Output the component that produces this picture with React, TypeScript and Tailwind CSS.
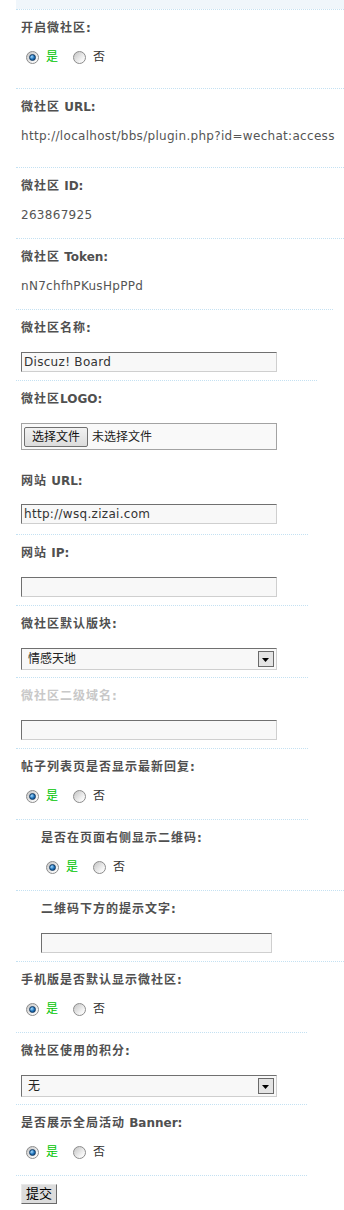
import React from "react";

function Radio({ checked }: { checked?: boolean }) {
  return (
    <span className="inline-flex h-[13px] w-[13px] shrink-0 items-center justify-center rounded-full border border-[#8c8c8c] bg-[linear-gradient(135deg,#c4c4c4,#f4f4f4_70%,#ffffff)]">
      {checked ? (
        <span className="h-[7px] w-[7px] rounded-full border border-[#123a63] bg-[radial-gradient(circle_at_35%_35%,#a8dcff,#1a6fb8_55%,#0b3a6b)]" />
      ) : null}
    </span>
  );
}

function RadioRow() {
  return (
    <div className="mt-[13px] flex h-4 items-center pl-[5px] text-[12px] leading-4">
      <Radio checked />
      <span className="ml-[7px] text-[#00c400]">是</span>
      <span className="ml-[15px] flex">
        <Radio />
      </span>
      <span className="ml-[7px] text-[#333]">否</span>
    </div>
  );
}

function Label({ children, muted }: { children: React.ReactNode; muted?: boolean }) {
  return (
    <div
      className={
        muted
          ? "mt-[11px] h-[15px] whitespace-pre text-[12px] font-bold leading-[15px] tracking-[1px] text-[#c8c8c8]"
          : "mt-[11px] h-[15px] whitespace-pre text-[12px] font-bold leading-[15px] tracking-[1px] text-[#505050]"
      }
    >
      {children}
    </div>
  );
}

function Latin({ children }: { children: React.ReactNode }) {
  return <span className="tracking-normal">{children}</span>;
}

function TextInput({ value, narrow }: { value?: string; narrow?: boolean }) {
  return (
    <div
      className={
        (narrow ? "w-[231px] " : "w-[256px] ") +
        "mt-[16px] flex h-[20px] items-center border border-t-[#707070] border-l-[#707070] border-r-[#cfcfcf] border-b-[#cfcfcf] bg-[#f8f8f8] pl-[2px] text-[12px] leading-4 tracking-[0.3px] text-[#333]"
      }
    >
      {value}
    </div>
  );
}

function Select({ value }: { value: string }) {
  return (
    <div className="mt-[16px] flex h-[22px] w-[256px] items-center justify-between border border-t-[#707070] border-l-[#707070] border-r-[#cfcfcf] border-b-[#cfcfcf] bg-[#f8f8f8] pl-[6px] pr-[2px] text-[12px] leading-4 text-[#222]">
      <span>{value}</span>
      <span className="flex h-[16px] w-[16px] items-center justify-center border border-[#6a6a6a] bg-[#e4e4e4]">
        <svg width="8" height="5" viewBox="0 0 8 5" className="mt-[3px]">
          <path d="M0 0 H7 L3.5 4 Z" fill="#000" />
        </svg>
      </span>
    </div>
  );
}

function Value({ children }: { children: React.ReactNode }) {
  return (
    <div className="mt-[13px] h-4 whitespace-nowrap text-[12px] leading-4 tracking-[0.3px] text-[#555]">
      {children}
    </div>
  );
}

export default function App() {
  return (
    <div className="min-h-[1210px] w-[344px] bg-white pl-[16px] [font-family:'DejaVu_Sans','Noto_Sans_CJK_SC',sans-serif]">
      <div className="h-[9px] bg-[#f0f6fb]" />
      <div className="h-px w-[328px] border-t border-dotted border-[#c4e1f2]" />

      {/* 1 */}
      <div className="flex h-[78px] flex-col pl-[5px]">
        <Label>开启微社区:</Label>
        <RadioRow />
      </div>
      <div className="h-px w-[328px] border-t border-dotted border-[#c4e1f2]" />

      {/* 2 */}
      <div className="flex h-[78px] flex-col pl-[5px]">
        <Label>
          微社区<Latin>{" URL:"}</Latin>
        </Label>
        <Value>http://localhost/bbs/plugin.php?id=wechat:access</Value>
      </div>
      <div className="h-px w-[328px] border-t border-dotted border-[#c4e1f2]" />

      {/* 3 */}
      <div className="flex h-[70px] flex-col pl-[5px]">
        <Label>
          微社区<Latin>{" ID:"}</Latin>
        </Label>
        <Value>263867925</Value>
      </div>
      <div className="h-px w-[328px] border-t border-dotted border-[#c4e1f2]" />

      {/* 4 */}
      <div className="flex h-[70px] flex-col pl-[5px]">
        <Label>
          微社区<Latin>{" Token:"}</Latin>
        </Label>
        <Value>nN7chfhPKusHpPPd</Value>
      </div>
      <div className="h-px w-[317px] border-t border-dotted border-[#c4e1f2]" />

      {/* 5 */}
      <div className="flex h-[70px] flex-col pl-[5px]">
        <Label>微社区名称:</Label>
        <TextInput value="Discuz! Board" />
      </div>
      <div className="h-px w-[301px] border-t border-dotted border-[#c4e1f2]" />

      {/* 6 */}
      <div className="flex h-[153px] flex-col pl-[5px]">
        <Label>
          微社区<Latin>LOGO:</Latin>
        </Label>
        <div className="mt-[16px] flex h-[27px] w-[256px] items-center border border-[#a3a3a3] bg-[#f9f9f9] pl-[2px] text-[12px] leading-4 text-[#222]">
          <span className="flex h-[20px] w-[64px] items-center justify-center rounded-[2px] border border-[#707070] bg-[linear-gradient(#f2f2f2,#dcdcdc)] text-[12px] text-[#111]">
            选择文件
          </span>
          <span className="ml-[4px]">未选择文件</span>
        </div>
        <div className="mt-[24px] h-[15px] whitespace-pre text-[12px] font-bold leading-[15px] tracking-[1px] text-[#505050]">
          网站<Latin>{" URL:"}</Latin>
        </div>
        <div className="-mt-px">
          <TextInput value="http://wsq.zizai.com" />
        </div>
      </div>
      <div className="h-px w-[292px] border-t border-dotted border-[#c4e1f2]" />

      {/* 7 */}
      <div className="flex h-[70px] flex-col pl-[5px]">
        <Label>
          网站<Latin>{" IP:"}</Latin>
        </Label>
        <TextInput />
      </div>
      <div className="h-px w-[292px] border-t border-dotted border-[#c4e1f2]" />

      {/* 8 */}
      <div className="flex h-[71px] flex-col pl-[5px]">
        <Label>微社区默认版块:</Label>
        <Select value="情感天地" />
      </div>
      <div className="h-px w-[292px] border-t border-dotted border-[#c4e1f2]" />

      {/* 9 */}
      <div className="flex h-[70px] flex-col pl-[5px]">
        <Label muted>微社区二级域名:</Label>
        <TextInput />
      </div>
      <div className="h-px w-[292px] border-t border-dotted border-[#c4e1f2]" />

      {/* 10 */}
      <div className="flex h-[70px] flex-col pl-[5px]">
        <Label>帖子列表页是否显示最新回复:</Label>
        <RadioRow />
      </div>
      <div className="h-px w-[292px] border-t border-dotted border-[#c4e1f2]" />

      {/* 11 */}
      <div className="flex h-[70px] flex-col pl-[25px]">
        <Label>是否在页面右侧显示二维码:</Label>
        <RadioRow />
      </div>
      <div className="h-px w-[328px] border-t border-dotted border-[#c4e1f2]" />

      {/* 12 */}
      <div className="flex h-[70px] flex-col pl-[25px]">
        <Label>二维码下方的提示文字:</Label>
        <TextInput narrow />
      </div>
      <div className="h-px w-[328px] border-t border-dotted border-[#c4e1f2]" />

      {/* 13 */}
      <div className="flex h-[70px] flex-col pl-[5px]">
        <Label>手机版是否默认显示微社区:</Label>
        <RadioRow />
      </div>
      <div className="h-px w-[291px] border-t border-dotted border-[#c4e1f2]" />

      {/* 14 */}
      <div className="flex h-[71px] flex-col pl-[5px]">
        <Label>微社区使用的积分:</Label>
        <Select value="无" />
      </div>
      <div className="h-px w-[291px] border-t border-dotted border-[#c4e1f2]" />

      {/* 15 */}
      <div className="flex h-[70px] flex-col pl-[5px]">
        <Label>
          是否展示全局活动<Latin>{" Banner:"}</Latin>
        </Label>
        <RadioRow />
      </div>
      <div className="h-px w-[291px] border-t border-dotted border-[#c4e1f2]" />

      {/* 16 */}
      <div className="flex flex-col pl-[5px] pt-[8px]">
        <div className="flex h-[20px] w-[36px] items-center justify-center border border-t-[#e8e8e8] border-l-[#e8e8e8] border-r-[#6a6a6a] border-b-[#6a6a6a] bg-[#dcdcdc] text-[13px] leading-4 text-[#000]">
          提交
        </div>
      </div>
    </div>
  );
}
